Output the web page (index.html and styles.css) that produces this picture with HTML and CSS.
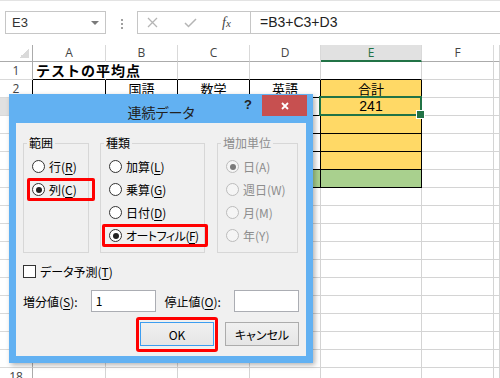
FILE: index.html
```html
<!DOCTYPE html>
<html lang="ja">

<head>
    <meta charset="UTF-8">
    <meta name="viewport" content="width=device-width, initial-scale=1.0">
    <title>連続データ</title>
    <link rel="stylesheet" href="styles.css">
</head>

<body>
    <!-- name box + formula bar -->
    <div class="formula-bar">
        <div class="name-box">
            <span>E3</span>
            <span class="name-arrow"></span>
        </div>
        <div class="grip"></div>
        <div class="formula">
            <div class="formula-buttons">
                <svg class="icon-cancel" width="11" height="11" viewBox="0 0 11 11"><path d="M1 1 L10 10 M10 1 L1 10" stroke="#b5b5b5" stroke-width="1.3" fill="none"/></svg>
                <svg class="icon-enter" width="13" height="10" viewBox="0 0 13 10"><path d="M1 5 L4.5 8.5 L12 1" stroke="#b5b5b5" stroke-width="1.5" fill="none"/></svg>
                <span class="fx">f<span class="fx-x">x</span></span>
            </div>
            <div class="formula-text">=B3+C3+D3</div>
        </div>
    </div>

    <div id="sheet" class="sheet"></div>

    <!-- 連続データ dialog -->
    <div class="dialog">
        <div class="dialog-title">
            <span class="title-text">連続データ</span>
            <span class="help">?</span>
            <span class="close"><svg width="8" height="8" viewBox="0 0 8 8"><path d="M1 1 L7 7 M7 1 L1 7" stroke="#fff" stroke-width="1.8" fill="none"/></svg></span>
        </div>
        <div class="dialog-body">
            <div class="groups">
                <fieldset class="group group-range">
                    <legend>範囲</legend>
                    <div class="option"><span class="radio"></span><span>行(<u>R</u>)</span></div>
                    <div class="option marked mark-range"><span class="radio checked"></span><span>列(<u>C</u>)</span></div>
                </fieldset>
                <fieldset class="group group-type">
                    <legend>種類</legend>
                    <div class="option"><span class="radio"></span><span>加算(<u>L</u>)</span></div>
                    <div class="option"><span class="radio"></span><span>乗算(<u>G</u>)</span></div>
                    <div class="option"><span class="radio"></span><span>日付(<u>D</u>)</span></div>
                    <div class="option marked mark-type"><span class="radio checked"></span><span class="tight">オートフィル(<u>F</u>)</span></div>
                </fieldset>
                <fieldset class="group group-unit disabled">
                    <legend>増加単位</legend>
                    <div class="option"><span class="radio checked"></span><span>日(A)</span></div>
                    <div class="option"><span class="radio"></span><span>週日(W)</span></div>
                    <div class="option"><span class="radio"></span><span>月(M)</span></div>
                    <div class="option"><span class="radio"></span><span>年(Y)</span></div>
                </fieldset>
            </div>

            <div class="check-row"><span class="checkbox"></span><span>データ予測(<u>T</u>)</span></div>

            <div class="value-row">
                <span class="value-label">増分値(<u>S</u>):</span>
                <span class="textbox">1</span>
                <span class="value-label stop-label">停止値(<u>O</u>):</span>
                <span class="textbox"></span>
            </div>

            <div class="button-row">
                <button class="btn btn-ok">OK</button>
                <button class="btn">キャンセル</button>
            </div>
        </div>
    </div>

    <script>
        var sheet = document.getElementById("sheet");
        var columns = ["A", "B", "C", "D", "E", "F", "G"];
        var values = { A1: "テストの平均点", B2: "国語", C2: "数学", D2: "英語", E2: "合計", E3: "241" };

        function addCell(className, text) {
            var cell = document.createElement("div");
            cell.className = className;
            cell.textContent = text;
            sheet.appendChild(cell);
        }

        // column headers
        addCell("corner", "");
        columns.forEach(col => addCell(col === "E" ? "col-head active" : "col-head", col === "G" ? "" : col));

        for (var row = 1; row <= 18; row++) {
            var headClass = "row-head";
            if (row === 3) headClass += " active";
            if (row >= 2 && row <= 7) headClass += " table-left";
            addCell(headClass, row);

            columns.forEach(col => {
                var ref = col + row;
                var inTable = "ABCDE".includes(col);
                var cls = "cell";
                if (inTable && row === 1) cls += " table-top";
                if (inTable && row >= 2 && row <= 7) cls += " table";
                if (col === "E" && row >= 2 && row <= 6) cls += " total";
                if (inTable && row === 7) cls += " average";
                if (ref === "A1") cls += " title";
                if (ref === "E3") cls += " selected number";
                addCell(cls, values[ref] || "");
            });
        }
    </script>
</body>
</html>
```

FILE: styles.css
```css
* {
    box-sizing: border-box;
}

body {
    margin: 0;
    width: 500px;
    height: 378px;
    overflow: hidden;
    position: relative;
    background: #fff;
    color: #000;
    font-family: "Noto Sans CJK JP", sans-serif;
}

/* formula bar */
.formula-bar {
    display: flex;
    align-items: flex-start;
    height: 45px;
    padding: 10px 0 0 5px;
    border-top: 1px solid #e3e3e3;
}

.name-box {
    width: 101px;
    height: 23px;
    display: flex;
    align-items: center;
    padding: 0 6px;
    border: 1px solid #c6c6c6;
    font: 13px "Liberation Sans", sans-serif;
    color: #333;
}

.name-arrow {
    margin-left: auto;
    border-left: 4px solid transparent;
    border-right: 4px solid transparent;
    border-top: 4px solid #7a7a7a;
}

.grip {
    width: 2px;
    height: 10px;
    margin: 8px 14px 0 15px;
    background: repeating-linear-gradient(to bottom, #a0a0a0 0 2px, transparent 2px 4px);
}

.formula {
    flex: 1;
    height: 23px;
    display: flex;
    border: 1px solid #c6c6c6;
    border-right: none;
}

.formula-buttons {
    width: 113px;
    display: flex;
    align-items: center;
    padding-left: 9px;
    border-right: 1px solid #c6c6c6;
}

.icon-enter {
    margin-left: 26px;
}

.fx {
    margin-left: 25px;
    font: italic 14px "Liberation Serif", serif;
    color: #444;
}

.fx-x {
    font-size: 11px;
}

.formula-text {
    padding-left: 9px;
    font: 14px "Liberation Sans", sans-serif;
    line-height: 21px;
    color: #222;
}

/* sheet grid */
.sheet {
    display: grid;
    grid-template-columns: 33px 73px 72px 72px 71px 101px 72px 1fr;
    grid-template-rows: 17px;
    grid-auto-rows: 18px;
}

.corner {
    border-right: 1px solid #ababab;
    border-bottom: 1px solid #ababab;
    background: linear-gradient(135deg, transparent 50%, #dadada 50%) no-repeat right 3px bottom 3px / 10px 10px;
}

.col-head {
    border-right: 1px solid #d9d9d9;
    border-bottom: 1px solid #ababab;
    text-align: center;
    font: 12px "Open Sans", sans-serif;
    line-height: 16px;
    color: #444;
}

.col-head.active {
    background: #e1e1e1;
    border-bottom: 2px solid #217346;
    color: #217346;
}

.row-head {
    border-right: 1px solid #ababab;
    border-bottom: 1px solid #d9d9d9;
    text-align: center;
    font: 12px "Open Sans", sans-serif;
    line-height: 17px;
    color: #444;
}

.row-head.active {
    background: #e1e1e1;
}

.row-head.table-left {
    border-right-color: #000;
}

.cell {
    border-right: 1px solid #d4d4d4;
    border-bottom: 1px solid #d4d4d4;
    text-align: center;
    white-space: nowrap;
    font-size: 13px;
    line-height: 17px;
}

.cell.table-top {
    border-bottom-color: #000;
}

.cell.table {
    border-right-color: #000;
    border-bottom-color: #000;
}

.cell.total {
    background: #ffd966;
}

.cell.average {
    background: #a9d08e;
}

.cell.title {
    text-align: left;
    padding-left: 3px;
    font-size: 14px;
    font-weight: bold;
    letter-spacing: 1px;
    border-right-color: transparent;
}

.cell.number {
    font-family: "Liberation Sans", sans-serif;
    font-size: 14px;
}

.cell.selected {
    position: relative;
    z-index: 1;
}

.cell.selected::after {
    content: "";
    position: absolute;
    left: -2px;
    top: -2px;
    right: -1px;
    bottom: -1px;
    border: 2px solid #217346;
}

.cell.selected::before {
    content: "";
    position: absolute;
    right: -4px;
    bottom: -4px;
    width: 7px;
    height: 7px;
    background: #217346;
    border: 1px solid #fff;
    z-index: 2;
}

/* dialog */
.dialog {
    position: absolute;
    left: 9px;
    top: 94px;
    width: 304px;
    height: 269px;
    padding: 0 7px 7px;
    background: #62b1f2;
    box-shadow: 2px 2px 5px rgba(0, 0, 0, 0.3);
    z-index: 10;
    font-size: 12px;
    font-feature-settings: "palt";
}

.dialog-title {
    display: grid;
    grid-template-columns: 1fr 12px 45px;
    column-gap: 8px;
    height: 29px;
    margin: 0 -7px;
    padding: 0 6px;
}

.title-text {
    grid-row: 1;
    grid-column: 1 / -1;
    margin-top: 8px;
    text-align: center;
    font-size: 14px;
    line-height: 20px;
    color: #222;
}

.help {
    grid-row: 1;
    grid-column: 2;
    margin-top: 3px;
    text-align: center;
    font: bold 13px "Liberation Sans", sans-serif;
    line-height: 16px;
    color: #222;
}

.close {
    grid-row: 1;
    grid-column: 3;
    height: 21px;
    margin-top: 1px;
    background: #c75050;
    display: flex;
    align-items: center;
    justify-content: center;
}

.dialog-body {
    height: 233px;
    padding: 12px 7px 0;
    background: #f0f0f0;
}

.groups {
    display: flex;
    gap: 11px;
}

.group {
    margin: 0;
    min-width: 0;
    height: 118px;
    padding: 4px 0 0 8px;
    border: 1px solid #d7d7d7;
}

.group legend {
    margin-left: -5px;
    padding: 0 2px;
    line-height: 16px;
}

.group-range {
    width: 66px;
}

.group-type {
    width: 105px;
}

.group-unit {
    width: 81px;
    margin-left: 1px;
}

.option {
    position: relative;
    display: flex;
    align-items: center;
    gap: 4px;
    height: 23px;
    white-space: nowrap;
}

.tight {
    letter-spacing: -0.5px;
}

.radio {
    width: 13px;
    height: 13px;
    border: 1px solid #333;
    border-radius: 50%;
    background: #fff;
    display: flex;
    align-items: center;
    justify-content: center;
}

.radio.checked::after {
    content: "";
    width: 6px;
    height: 6px;
    border-radius: 50%;
    background: #222;
}

.disabled {
    color: #8d8d8d;
}

.disabled .radio {
    border-color: #bcbcbc;
    background: #f5f5f5;
}

.disabled .radio.checked::after {
    background: #7a7a7a;
}

/* red highlight frames */
.marked::after {
    content: "";
    position: absolute;
    top: 0;
    bottom: 0;
    border: 3px solid #f00;
    border-radius: 2px;
}

.mark-range::after {
    left: -5px;
    width: 62px;
}

.mark-type::after {
    left: -7px;
    width: 100px;
}

.check-row {
    display: flex;
    align-items: center;
    gap: 4px;
    height: 16px;
    margin-top: 10px;
}

.checkbox {
    width: 13px;
    height: 13px;
    border: 1px solid #333;
    background: #fff;
}

.value-row {
    display: flex;
    align-items: center;
    margin-top: 11px;
}

.value-label {
    width: 68px;
    white-space: nowrap;
}

.stop-label {
    width: 70px;
    margin-left: 9px;
}

.textbox {
    width: 65px;
    height: 22px;
    padding-left: 4px;
    border: 1px solid #abadb3;
    background: #fff;
    line-height: 20px;
}

.button-row {
    display: flex;
    justify-content: flex-end;
    gap: 11px;
    margin-top: 10px;
}

.btn {
    width: 74px;
    height: 24px;
    padding: 0;
    border: 1px solid #acacac;
    background: linear-gradient(#f0f0f0, #e5e5e5);
    font: inherit;
    color: #000;
}

.btn-ok {
    position: relative;
    border-color: #3c9df0;
}

.btn-ok::after {
    content: "";
    position: absolute;
    left: -5px;
    right: -5px;
    top: -6px;
    bottom: -7px;
    border: 3px solid #f00;
    border-radius: 3px;
}

u {
    text-underline-offset: 2px;
}
```
